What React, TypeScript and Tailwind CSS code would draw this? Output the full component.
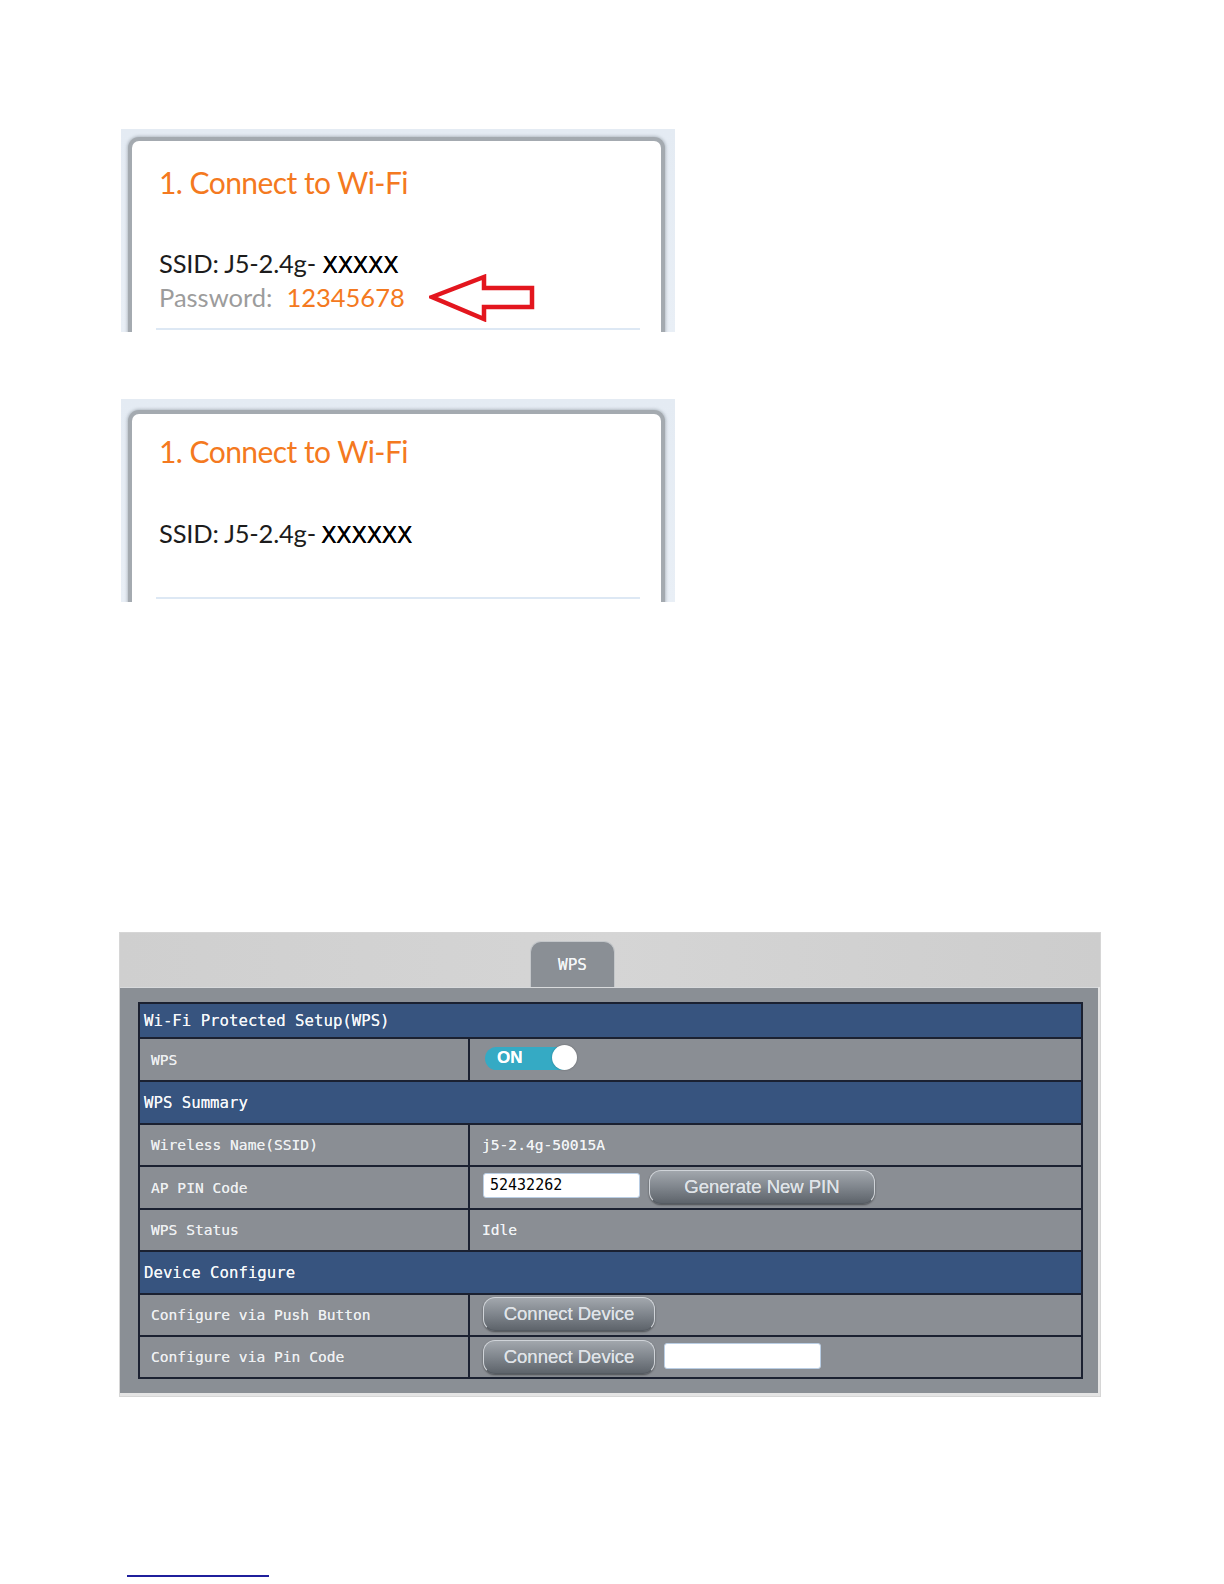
import React from "react";

const lato = { fontFamily: "Lato, 'Open Sans', sans-serif" };

function Arrow() {
  return (
    <svg width="108" height="48" viewBox="0 0 108 48" className="shrink-0">
      <path
        d="M3 23 L55 3 L55 14 L103 14 L103 33 L55 33 L55 45 Z"
        fill="none"
        stroke="#e3161e"
        strokeWidth="4.5"
        strokeLinejoin="miter"
      />
    </svg>
  );
}

function PhoneFrame({
  cardTop,
  children,
}: {
  cardTop: string;
  children: React.ReactNode;
}) {
  return (
    <div className="w-[554px] h-[203px] overflow-hidden bg-gradient-to-b from-[#e4ebf3] to-[#e9eff6] pl-[7px] pr-[10px]">
      <div
        className={`${cardTop} h-full rounded-t-[11px] border-[4px] border-b-0 border-[#a4aab0] bg-white shadow-[0_0_3px_1px_rgba(90,100,110,0.35)]`}
      >
        {children}
      </div>
    </div>
  );
}

function Btn({ children, w, up }: { children: React.ReactNode; w: string; up?: string }) {
  return (
    <div
      className={`${w} ${up ?? ""} h-[34px] flex items-center justify-center rounded-[12px] border border-[#cfd3d8] border-b-[#555b62] bg-gradient-to-b from-[#a2a7ad] via-[#80868d] to-[#5e646b] shadow-[0_1px_2px_rgba(0,0,0,0.45)] text-[18.5px] text-[#dfe3e8]`}
      style={{ fontFamily: "'Liberation Sans', Arial, sans-serif" }}
    >
      {children}
    </div>
  );
}

function HeaderRow({ text, h, first }: { text: string; h: string; first?: boolean }) {
  return (
    <div
      className={`${h} ${first ? "" : "border-t-2 border-[#1b2131]"} bg-[#37547f] flex items-center pl-[4px] text-[15.7px] text-[#f6f8fa] [text-shadow:0_0_0.6px_rgba(255,255,255,0.9)]`}
    >
      {text}
    </div>
  );
}

function Row({ label, h, children }: { label: string; h: string; children: React.ReactNode }) {
  return (
    <div className={`${h} border-t-2 border-[#1b2131] bg-[#8a8e94] flex`}>
      <div className="w-[328px] flex items-center pl-[11px] text-[14.6px] text-[#eef0f2] [text-shadow:0_0_0.5px_rgba(255,255,255,0.8)]">
        {label}
      </div>
      <div className="flex-1 border-l-2 border-[#1b2131] flex items-center gap-[9px] pl-[13px] text-[14.6px] text-[#f2f4f6] [text-shadow:0_0_0.5px_rgba(255,255,255,0.8)]">
        {children}
      </div>
    </div>
  );
}

export default function App() {
  return (
    <div className="w-[1224px] min-h-[1584px] bg-white flex flex-col">
      {/* First screenshot */}
      <div className="mt-[129px] ml-[121px]">
        <PhoneFrame cardTop="mt-[8px]">
          <div className="pl-[27px]" style={lato}>
            <div className="mt-[26px] text-[30px] leading-none text-[#f47920] tracking-[-0.55px]">
              1. Connect to Wi-Fi
            </div>
            <div className="mt-[54px] text-[25.5px] leading-none text-[#1c1c1c] flex items-baseline">
              <span className="tracking-[-0.2px]">SSID: J5-2.4g-&nbsp;</span>
              <span
                className="text-[23px] text-black tracking-[-0.6px] [text-shadow:0_0_0.6px_#000]"
                style={{ fontFamily: "'DejaVu Sans', Verdana, sans-serif" }}
              >
                XXXXX
              </span>
            </div>
            <div className="h-[26px] mt-[8px] flex items-center text-[25.5px] leading-none">
              <span className="text-[#9c9c9c]">Password:</span>
              <span className="ml-[14px] text-[#f47920]">12345678</span>
              <div className="ml-[24px] mt-[-1px]">
                <Arrow />
              </div>
            </div>
            <div className="mt-[17px] mr-[21px] ml-[-3px] h-[2px] bg-[#dde8f4]" />
          </div>
        </PhoneFrame>
      </div>

      {/* Second screenshot */}
      <div className="mt-[67px] ml-[121px]">
        <PhoneFrame cardTop="mt-[11px]">
          <div className="pl-[27px]" style={lato}>
            <div className="mt-[22px] text-[30px] leading-none text-[#f47920] tracking-[-0.55px]">
              1. Connect to Wi-Fi
            </div>
            <div className="mt-[55px] text-[25.5px] leading-none text-[#1c1c1c] flex items-baseline">
              <span className="tracking-[-0.2px]">SSID: J5-2.4g-</span>
              <span
                className="ml-[5px] text-[23px] text-black tracking-[-0.6px] [text-shadow:0_0_0.6px_#000]"
                style={{ fontFamily: "'DejaVu Sans', Verdana, sans-serif" }}
              >
                XXXXXX
              </span>
            </div>
            <div className="mt-[50px] mr-[21px] ml-[-3px] h-[2px] bg-[#dde8f4]" />
          </div>
        </PhoneFrame>
      </div>

      {/* WPS panel */}
      <div
        className="mt-[330px] ml-[119px] w-[982px] border border-[#d6d6d6] bg-[#e4e4e4]"
        style={{ fontFamily: "'DejaVu Sans Mono', 'Liberation Mono', monospace" }}
      >
        <div className="h-[54px] bg-gradient-to-r from-[#cfcfcf] via-[#d5d5d5] to-[#cdcdcd] flex items-end pl-[410px]">
          <div className="w-[85px] h-[46px] rounded-t-[11px] border border-b-0 border-[#c4c7ca] bg-[#8a8f95] flex items-center justify-center text-[16px] text-[#f4f6f8] [text-shadow:0_0_0.6px_rgba(255,255,255,0.9)]">
            WPS
          </div>
        </div>
        <div className="mr-[2px] mb-[3px] border-t border-[#d8dadc] bg-[#8a8f95] pl-[18px] pr-[15px] pt-[14px] pb-[14px]">
          <div className="border-2 border-[#1b2131]">
            <HeaderRow first h="h-[33px]" text="Wi-Fi Protected Setup(WPS)" />
            <Row label="WPS" h="h-[43px]">
              <div className="relative ml-[2px] mt-[-3px] w-[92px] h-[24px] flex items-center">
                <div className="w-[88px] h-[23px] rounded-full bg-[#35aac4] flex items-center pl-[12px]">
                  <span
                    className="text-[17px] font-bold text-white"
                    style={{ fontFamily: "'Liberation Sans', Arial, sans-serif" }}
                  >
                    ON
                  </span>
                </div>
                <div className="absolute left-[67px] top-[-1px] w-[25px] h-[25px] rounded-full bg-white shadow-[0_0_2px_rgba(0,0,0,0.3)]" />
              </div>
            </Row>
            <HeaderRow h="h-[43px]" text="WPS Summary" />
            <Row label="Wireless Name(SSID)" h="h-[42px]">
              <span className="ml-[-1px]">j5-2.4g-50015A</span>
            </Row>
            <Row label="AP PIN Code" h="h-[43px]">
              <div className="mt-[-5px] w-[157px] h-[25px] rounded-[3px] bg-white border border-[#b9cde3] flex items-center pl-[6px] text-[15px] text-black [text-shadow:none]">
                52432262
              </div>
              <Btn w="w-[226px]" up="mt-[-2px]">
                Generate New PIN
              </Btn>
            </Row>
            <Row label="WPS Status" h="h-[42px]">
              <span className="ml-[-1px]">Idle</span>
            </Row>
            <HeaderRow h="h-[43px]" text="Device Configure" />
            <Row label="Configure via Push Button" h="h-[42px]">
              <Btn w="w-[172px]" up="mt-[-3px]">
                Connect Device
              </Btn>
            </Row>
            <Row label="Configure via Pin Code" h="h-[42px]">
              <Btn w="w-[172px]">Connect Device</Btn>
              <div className="mt-[-3px] w-[157px] h-[26px] rounded-[3px] bg-white border border-[#b9cde3]" />
            </Row>
          </div>
        </div>
      </div>

      {/* bottom link underline */}
      <div className="mt-[178px] ml-[127px] w-[142px] h-[2px] bg-[#1f1f9c]" />
    </div>
  );
}
